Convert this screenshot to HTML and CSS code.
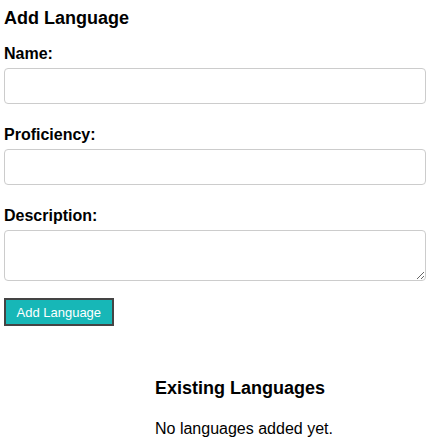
FILE: index.html
```html
<!DOCTYPE html>
<html lang="en">
<head>
<meta charset="utf-8">
<title>Add Language</title>
<link rel="stylesheet" href="styles.css">
</head>
<body>
<div class="page">
  <form class="lang-form">
    <h2 class="title">Add Language</h2>
    <label class="field-label" for="name">Name:</label>
    <input class="field-input" id="name" type="text">
    <label class="field-label" for="prof">Proficiency:</label>
    <input class="field-input" id="prof" type="text">
    <label class="field-label" for="desc">Description:</label>
    <textarea class="field-input field-area" id="desc"></textarea>
    <button class="submit-btn" type="button">Add Language</button>
  </form>
  <section class="existing">
    <h2 class="existing-title">Existing Languages</h2>
    <p class="empty">No languages added yet.</p>
  </section>
</div>
</body>
</html>
```
FILE: styles.css
```css
html, body {
  margin: 0;
  padding: 0;
  background: #fff;
}
body {
  font-family: "Liberation Sans", Arial, sans-serif;
  color: #000;
}
.page {
  padding: 8px 20px 0 4px;
}
.lang-form {
  display: flex;
  flex-direction: column;
  align-items: flex-start;
}
.title {
  font-size: 18px;
  font-weight: bold;
  margin: 0 0 16px 0;
}
.field-label {
  font-size: 16px;
  font-weight: bold;
  margin-bottom: 5px;
}
.field-input {
  box-sizing: border-box;
  width: 100%;
  height: 36px;
  border: 1px solid #ccc;
  border-radius: 4px;
  margin: 0 0 22px 0;
  padding: 8px;
  font-family: inherit;
  font-size: 14px;
  background: #fff;
}
.field-area {
  height: 51px;
  margin-bottom: 17px;
  resize: vertical;
  display: block;
}
.submit-btn {
  box-sizing: border-box;
  height: 28px;
  padding: 0 10.5px;
  background: #17b7b7;
  color: #fff;
  border: 2px solid #444;
  border-radius: 0;
  font-family: inherit;
  font-size: 13px;
  font-weight: normal;
}
.existing {
  padding-left: 151px;
  margin-top: 52px;
}
.existing-title {
  font-size: 18px;
  font-weight: bold;
  margin: 0 0 21px 0;
}
.empty {
  font-size: 16px;
  margin: 0;
}
```
